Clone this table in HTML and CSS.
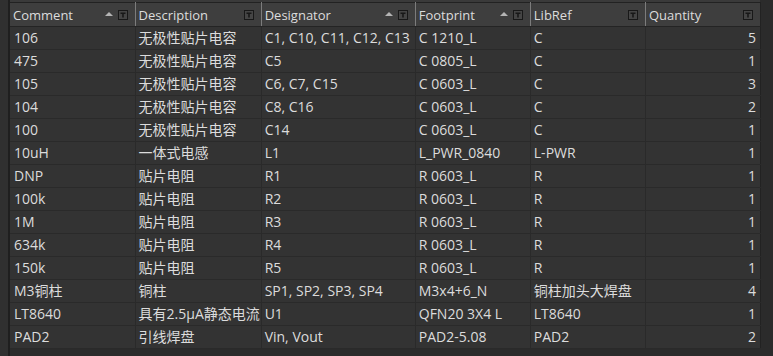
FILE: index.html
```html
<!DOCTYPE html>
<html>
<head>
<meta charset="utf-8">
<link rel="stylesheet" href="styles.css">
</head>
<body>
<div class="page">
  <div class="gutter"></div>
  <div class="grid-wrap">
    <table class="bom">
      <colgroup>
        <col class="c1"><col class="c2"><col class="c3"><col class="c4"><col class="c5"><col class="c6">
      </colgroup>
      <thead>
        <tr>
          <th><div class="hd"><span class="lbl">Comment</span><span class="sort"></span><span class="flt"><svg width="10" height="10" viewBox="0 0 10 10"><rect x="0.5" y="0.5" width="9" height="9" fill="#454545" stroke="#181818"/><path d="M2.5 2.5h5v1.6h-1.7v3.4h-1.6v-3.4h-1.7z" fill="#181818"/></svg></span></div></th>
          <th><div class="hd"><span class="lbl">Description</span><span class="flt"><svg width="10" height="10" viewBox="0 0 10 10"><rect x="0.5" y="0.5" width="9" height="9" fill="#454545" stroke="#181818"/><path d="M2.5 2.5h5v1.6h-1.7v3.4h-1.6v-3.4h-1.7z" fill="#181818"/></svg></span></div></th>
          <th><div class="hd"><span class="lbl">Designator</span><span class="sort"></span><span class="flt"><svg width="10" height="10" viewBox="0 0 10 10"><rect x="0.5" y="0.5" width="9" height="9" fill="#454545" stroke="#181818"/><path d="M2.5 2.5h5v1.6h-1.7v3.4h-1.6v-3.4h-1.7z" fill="#181818"/></svg></span></div></th>
          <th><div class="hd"><span class="lbl">Footprint</span><span class="sort"></span><span class="flt"><svg width="10" height="10" viewBox="0 0 10 10"><rect x="0.5" y="0.5" width="9" height="9" fill="#454545" stroke="#181818"/><path d="M2.5 2.5h5v1.6h-1.7v3.4h-1.6v-3.4h-1.7z" fill="#181818"/></svg></span></div></th>
          <th><div class="hd"><span class="lbl">LibRef</span><span class="flt"><svg width="10" height="10" viewBox="0 0 10 10"><rect x="0.5" y="0.5" width="9" height="9" fill="#454545" stroke="#181818"/><path d="M2.5 2.5h5v1.6h-1.7v3.4h-1.6v-3.4h-1.7z" fill="#181818"/></svg></span></div></th>
          <th><div class="hd"><span class="lbl">Quantity</span><span class="flt"><svg width="10" height="10" viewBox="0 0 10 10"><rect x="0.5" y="0.5" width="9" height="9" fill="#454545" stroke="#181818"/><path d="M2.5 2.5h5v1.6h-1.7v3.4h-1.6v-3.4h-1.7z" fill="#181818"/></svg></span></div></th>
        </tr>
      </thead>
      <tbody>
        <tr><td>106</td><td class="zh">无极性贴片电容</td><td>C1, C10, C11, C12, C13</td><td>C 1210_L</td><td>C</td><td class="num">5</td></tr>
        <tr><td>475</td><td class="zh">无极性贴片电容</td><td>C5</td><td>C 0805_L</td><td>C</td><td class="num">1</td></tr>
        <tr><td>105</td><td class="zh">无极性贴片电容</td><td>C6, C7, C15</td><td>C 0603_L</td><td>C</td><td class="num">3</td></tr>
        <tr><td>104</td><td class="zh">无极性贴片电容</td><td>C8, C16</td><td>C 0603_L</td><td>C</td><td class="num">2</td></tr>
        <tr><td>100</td><td class="zh">无极性贴片电容</td><td>C14</td><td>C 0603_L</td><td>C</td><td class="num">1</td></tr>
        <tr><td>10uH</td><td class="zh">一体式电感</td><td>L1</td><td>L_PWR_0840</td><td>L-PWR</td><td class="num">1</td></tr>
        <tr><td>DNP</td><td class="zh">贴片电阻</td><td>R1</td><td>R 0603_L</td><td>R</td><td class="num">1</td></tr>
        <tr><td>100k</td><td class="zh">贴片电阻</td><td>R2</td><td>R 0603_L</td><td>R</td><td class="num">1</td></tr>
        <tr><td>1M</td><td class="zh">贴片电阻</td><td>R3</td><td>R 0603_L</td><td>R</td><td class="num">1</td></tr>
        <tr><td>634k</td><td class="zh">贴片电阻</td><td>R4</td><td>R 0603_L</td><td>R</td><td class="num">1</td></tr>
        <tr><td>150k</td><td class="zh">贴片电阻</td><td>R5</td><td>R 0603_L</td><td>R</td><td class="num">1</td></tr>
        <tr><td>M3铜柱</td><td class="zh">铜柱</td><td>SP1, SP2, SP3, SP4</td><td>M3x4+6_N</td><td class="zh">铜柱加头大焊盘</td><td class="num">4</td></tr>
        <tr><td>LT8640</td><td class="zh">具有2.5µA静态电流</td><td>U1</td><td>QFN20 3X4 L</td><td>LT8640</td><td class="num">1</td></tr>
        <tr><td>PAD2</td><td class="zh">引线焊盘</td><td>Vin, Vout</td><td>PAD2-5.08</td><td>PAD2</td><td class="num">2</td></tr>
      </tbody>
    </table>
  </div>
</div>
</body>
</html>
```

FILE: styles.css
```css
html, body {
  margin: 0;
  padding: 0;
  background: #2b2b2b;
  width: 773px;
  height: 356px;
  overflow: hidden;
}
.page {
  display: flex;
  height: 356px;
  background: #2b2b2b;
  font-family: "Open Sans", "Noto Sans CJK SC", sans-serif;
  font-size: 13px;
  color: #dcdcdc;
}
.gutter {
  width: 8px;
  background: #303030;
  border-right: 2px solid #1f1f1f;
  flex: none;
}
.grid-wrap {
  padding-top: 2px;
  background: linear-gradient(#3a3a3a 0 2px, transparent 2px);
  width: 750px;
  flex: none;
}
.bom {
  border-collapse: collapse;
  table-layout: fixed;
  width: 751px;
  border-top: 1px solid #222;
  border-right: 1px solid #222;
  border-bottom: 1px solid #262626;
}
.c1 { width: 125px; }
.c2 { width: 126px; }
.c3 { width: 154px; }
.c4 { width: 115px; }
.c5 { width: 115px; }
.c6 { width: 115px; }
thead th {
  background: #3e3e3e;
  height: 23px;
  padding: 0;
  font-weight: normal;
  text-align: left;
  border-bottom: 1px solid #242424;
  border-left: 1px solid #7c7c7c;
}
thead th:first-child { border-left: none; }
.hd {
  display: flex;
  align-items: center;
  height: 23px;
  padding: 0 7px 0 3px;
}
.lbl {
  flex: 1;
  white-space: nowrap;
  overflow: hidden;
}
.sort {
  width: 0;
  height: 0;
  border-left: 4px solid transparent;
  border-right: 4px solid transparent;
  border-bottom: 4px solid #b4b4b4;
  margin-right: 5px;
  margin-top: -1px;
}
.flt {
  display: flex;
  width: 10px;
  height: 10px;
}
tbody td {
  height: 22px;
  padding: 0 3px;
  background: #333333;
  border-bottom: 1px solid #2a2a2a;
  border-left: 1px solid #2a2a2a;
  white-space: nowrap;
  overflow: hidden;
  font-size: 14px;
  line-height: 22px;
}
tbody td:first-child { border-left: none; padding-left: 4px; }
.num { text-align: right; padding-right: 4px; }
```
